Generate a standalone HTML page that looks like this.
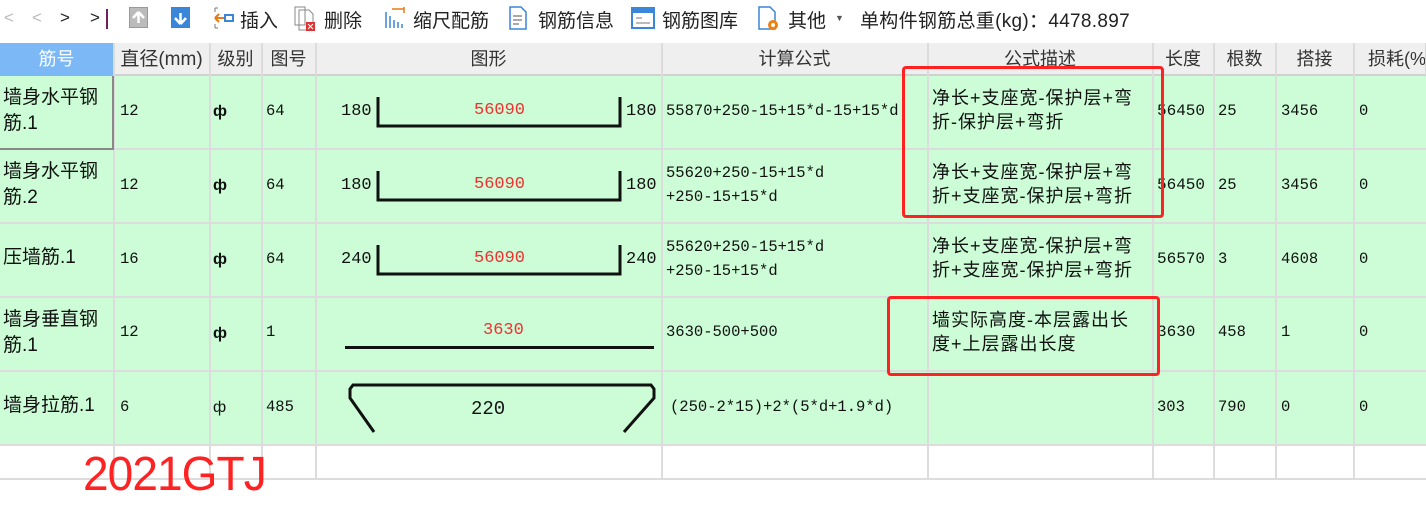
<!DOCTYPE html>
<html><head><meta charset="utf-8">
<style>
*{margin:0;padding:0;box-sizing:border-box}
body{width:1426px;height:514px;background:#fff;position:relative;overflow:hidden;font-family:"Liberation Sans","Noto Sans CJK SC",sans-serif;color:#111}
.a{position:absolute;white-space:nowrap}
.tb{font-size:19px;color:#222;top:6px}
.hd{position:absolute;top:43px;height:33px;background:#efefef;border-right:1px solid #d8d8d8;border-bottom:2px solid #d0d0d0;font-size:18px;color:#333;text-align:center;line-height:33px;white-space:nowrap;overflow:hidden}
.row{position:absolute;left:0;width:1426px;height:74px;background:#ccfdd6;border-bottom:2px solid #dcdcdc}
.vl{position:absolute;top:43px;width:2px;height:436px;background:#dcdcdc}
.c{position:absolute;font-size:16px;line-height:24px;white-space:nowrap}
.m{font-family:"Liberation Mono","Noto Sans CJK SC",monospace;font-size:15.5px}
.lb{font-size:19px;line-height:26px}
.ds{font-size:18px;letter-spacing:1px}
.red{color:#f03030}
.box{position:absolute;border:3px solid #f22;border-radius:4px}
</style></head><body>
<!-- toolbar -->
<div class="a" style="left:4px;top:8px;font-size:17px;color:#bbb">&lt;</div>
<div class="a" style="left:32px;top:8px;font-size:17px;color:#bbb">&lt;</div>
<div class="a" style="left:60px;top:8px;font-size:17px;color:#222">&gt;</div>
<div class="a" style="left:90px;top:8px;font-size:17px;color:#222">&gt;</div>
<div class="a" style="left:106px;top:9px;width:2px;height:20px;background:#702060"></div>
<div class="a" style="left:129px;top:7px;width:19px;height:21px;background:#bbb;border:1px solid #999"><svg width="17" height="19"><path d="M8.5 4 L3 10 M8.5 4 L14 10 M8.5 4 V15" stroke="#fff" stroke-width="2.5" fill="none"/></svg></div>
<div class="a" style="left:171px;top:7px;width:19px;height:21px;background:#3a86d8;border:1px solid #777"><svg width="17" height="19"><path d="M8.5 16 L3 10 M8.5 16 L14 10 M8.5 5 V16" stroke="#fff" stroke-width="2.5" fill="none"/></svg></div>
<svg class="a" style="left:212px;top:6px" width="22" height="24"><path d="M3 2h3M3 22h3M3 2v4M3 18v4" stroke="#777" fill="none"/><path d="M3 12h9M3 12l4-4M3 12l4 4" stroke="#e87a10" stroke-width="2" fill="none"/><rect x="13" y="9" width="8" height="6" fill="none" stroke="#3a86d8" stroke-width="2"/></svg>
<div class="a tb" style="left:240px">插入</div>
<svg class="a" style="left:293px;top:5px" width="26" height="28"><path d="M2 2h10v18H2z M6 5h10l4 4v16H6z" fill="#fff" stroke="#888"/><rect x="13" y="17" width="9" height="9" fill="#e03030"/><path d="M15 19l5 5M20 19l-5 5" stroke="#fff"/></svg>
<div class="a tb" style="left:324px">删除</div>
<svg class="a" style="left:384px;top:6px" width="24" height="24"><path d="M2 6v16M6 10v12M10 14v8M14 16v6M18 18v4" stroke="#3a86d8" stroke-width="1.5"/><path d="M8 3h12M20 1v6" stroke="#e87a10" stroke-width="1.5"/></svg>
<div class="a tb" style="left:413px">缩尺配筋</div>
<svg class="a" style="left:508px;top:5px" width="20" height="26"><path d="M2 2h11l5 5v17H2z" fill="#fff" stroke="#3a86d8" stroke-width="1.5"/><path d="M5 11h9M5 15h9M5 19h6" stroke="#555"/></svg>
<div class="a tb" style="left:538px">钢筋信息</div>
<svg class="a" style="left:631px;top:7px" width="24" height="22"><rect x="1" y="1" width="22" height="20" fill="#fff" stroke="#3a86d8" stroke-width="2"/><rect x="1" y="1" width="22" height="5" fill="#3a86d8"/><path d="M5 11h6M5 16h14" stroke="#777"/></svg>
<div class="a tb" style="left:662px">钢筋图库</div>
<svg class="a" style="left:757px;top:5px" width="24" height="28"><path d="M2 2h11l5 5v17H2z" fill="#fff" stroke="#3a86d8" stroke-width="1.5"/><circle cx="16" cy="20" r="5" fill="#f08010"/><circle cx="16" cy="20" r="2" fill="#fff"/></svg>
<div class="a tb" style="left:788px">其他</div>
<div class="a" style="left:835px;top:13px;font-size:9px;color:#555">▼</div>
<div class="a tb" style="left:860px;letter-spacing:0.3px">单构件钢筋总重(kg)：4478.897</div>

<!-- header -->
<div class="hd" style="left:0;width:114px;background:#7cb8f5;color:#fff;border-bottom-color:#7cb8f5">筋号</div>
<div class="hd" style="left:114px;width:96px;font-size:19px">直径(mm)</div>
<div class="hd" style="left:210px;width:52px">级别</div>
<div class="hd" style="left:262px;width:54px">图号</div>
<div class="hd" style="left:316px;width:346px">图形</div>
<div class="hd" style="left:662px;width:266px">计算公式</div>
<div class="hd" style="left:928px;width:225px">公式描述</div>
<div class="hd" style="left:1153px;width:61px">长度</div>
<div class="hd" style="left:1214px;width:62px">根数</div>
<div class="hd" style="left:1276px;width:78px">搭接</div>
<div class="hd" style="left:1354px;width:72px;text-align:left;padding-left:14px">损耗(%)</div>

<!-- rows -->
<div class="row" style="top:76px"></div>
<div class="row" style="top:150px"></div>
<div class="row" style="top:224px"></div>
<div class="row" style="top:298px"></div>
<div class="row" style="top:372px"></div>
<div class="a" style="left:0;top:478px;width:1426px;height:2px;background:#dcdcdc"></div>
<div class="vl" style="left:113px"></div><div class="vl" style="left:209px"></div><div class="vl" style="left:261px"></div><div class="vl" style="left:315px"></div><div class="vl" style="left:661px"></div><div class="vl" style="left:927px"></div><div class="vl" style="left:1152px"></div><div class="vl" style="left:1213px"></div><div class="vl" style="left:1275px"></div><div class="vl" style="left:1353px"></div>
<div class="a" style="left:0;top:76px;width:114px;height:74px;border:2px solid #888;border-top:none;border-left:none"></div>

<!-- row 1 -->
<div class="c lb" style="left:3px;top:85px">墙身水平钢<br>筋.1</div>
<div class="c m" style="left:120px;top:99px">12</div>
<div class="c" style="left:213px;top:100px;font-weight:bold">ф</div>
<div class="c m" style="left:266px;top:99px">64</div>
<div class="c m" style="left:341px;top:100px;font-size:17px">180</div>
<div class="c m" style="left:626px;top:100px;font-size:17px">180</div>
<div class="c m red" style="left:474px;top:99px;font-size:17px">56090</div>
<svg class="a" style="left:376px;top:97px" width="248" height="34"><path d="M2 0V29H244V0" stroke="#111" stroke-width="3" fill="none"/></svg>
<div class="c m" style="left:666px;top:99px">55870+250-15+15*d-15+15*d</div>
<div class="c ds" style="left:932px;top:86px">净长+支座宽-保护层+弯<br>折-保护层+弯折</div>
<div class="c m" style="left:1157px;top:99px;font-size:16px">56450</div>
<div class="c m" style="left:1218px;top:99px">25</div>
<div class="c m" style="left:1281px;top:99px">3456</div>
<div class="c m" style="left:1359px;top:99px">0</div>

<!-- row 2 -->
<div class="c lb" style="left:3px;top:159px">墙身水平钢<br>筋.2</div>
<div class="c m" style="left:120px;top:173px">12</div>
<div class="c" style="left:213px;top:174px;font-weight:bold">ф</div>
<div class="c m" style="left:266px;top:173px">64</div>
<div class="c m" style="left:341px;top:174px;font-size:17px">180</div>
<div class="c m" style="left:626px;top:174px;font-size:17px">180</div>
<div class="c m red" style="left:474px;top:173px;font-size:17px">56090</div>
<svg class="a" style="left:376px;top:171px" width="248" height="34"><path d="M2 0V29H244V0" stroke="#111" stroke-width="3" fill="none"/></svg>
<div class="c m" style="left:666px;top:161px">55620+250-15+15*d<br>+250-15+15*d</div>
<div class="c ds" style="left:932px;top:160px">净长+支座宽-保护层+弯<br>折+支座宽-保护层+弯折</div>
<div class="c m" style="left:1157px;top:173px;font-size:16px">56450</div>
<div class="c m" style="left:1218px;top:173px">25</div>
<div class="c m" style="left:1281px;top:173px">3456</div>
<div class="c m" style="left:1359px;top:173px">0</div>

<!-- row 3 -->
<div class="c lb" style="left:3px;top:245px">压墙筋.1</div>
<div class="c m" style="left:120px;top:247px">16</div>
<div class="c" style="left:213px;top:248px;font-weight:bold">ф</div>
<div class="c m" style="left:266px;top:247px">64</div>
<div class="c m" style="left:341px;top:248px;font-size:17px">240</div>
<div class="c m" style="left:626px;top:248px;font-size:17px">240</div>
<div class="c m red" style="left:474px;top:247px;font-size:17px">56090</div>
<svg class="a" style="left:376px;top:245px" width="248" height="34"><path d="M2 0V29H244V0" stroke="#111" stroke-width="3" fill="none"/></svg>
<div class="c m" style="left:666px;top:235px">55620+250-15+15*d<br>+250-15+15*d</div>
<div class="c ds" style="left:932px;top:234px">净长+支座宽-保护层+弯<br>折+支座宽-保护层+弯折</div>
<div class="c m" style="left:1157px;top:247px;font-size:16px">56570</div>
<div class="c m" style="left:1218px;top:247px">3</div>
<div class="c m" style="left:1281px;top:247px">4608</div>
<div class="c m" style="left:1359px;top:247px">0</div>

<!-- row 4 -->
<div class="c lb" style="left:3px;top:307px">墙身垂直钢<br>筋.1</div>
<div class="c m" style="left:120px;top:320px">12</div>
<div class="c" style="left:213px;top:322px;font-weight:bold">ф</div>
<div class="c m" style="left:266px;top:320px">1</div>
<div class="c m red" style="left:483px;top:319px;font-size:17px">3630</div>
<div class="a" style="left:345px;top:346px;width:309px;height:3px;background:#111"></div>
<div class="c m" style="left:666px;top:320px">3630-500+500</div>
<div class="c ds" style="left:932px;top:308px">墙实际高度-本层露出长<br>度+上层露出长度</div>
<div class="c m" style="left:1157px;top:320px;font-size:16px">3630</div>
<div class="c m" style="left:1218px;top:320px">458</div>
<div class="c m" style="left:1281px;top:320px">1</div>
<div class="c m" style="left:1359px;top:320px">0</div>

<!-- row 5 -->
<div class="c lb" style="left:3px;top:393px">墙身拉筋.1</div>
<div class="c m" style="left:120px;top:395px">6</div>
<div class="c" style="left:213px;top:396px">ф</div>
<div class="c m" style="left:266px;top:395px">485</div>
<svg class="a" style="left:340px;top:383px" width="320" height="50"><path d="M34 49L10 15V6L13 2H311L314 6V15L284 49" stroke="#111" stroke-width="3" fill="none"/></svg>
<div class="c m" style="left:471px;top:397px;font-size:19px">220</div>
<div class="c m" style="left:670px;top:395px">(250-2*15)+2*(5*d+1.9*d)</div>
<div class="c m" style="left:1157px;top:395px">303</div>
<div class="c m" style="left:1218px;top:395px">790</div>
<div class="c m" style="left:1281px;top:395px">0</div>
<div class="c m" style="left:1359px;top:395px">0</div>

<!-- red boxes -->
<div class="box" style="left:902px;top:66px;width:262px;height:152px"></div>
<div class="box" style="left:887px;top:296px;width:273px;height:80px"></div>
<div class="a" style="left:83px;top:447px;font-size:48px;color:#f22;font-family:'Liberation Sans',sans-serif;letter-spacing:-1px;transform:scaleX(0.96);transform-origin:left">2021GTJ</div>
</body></html>
